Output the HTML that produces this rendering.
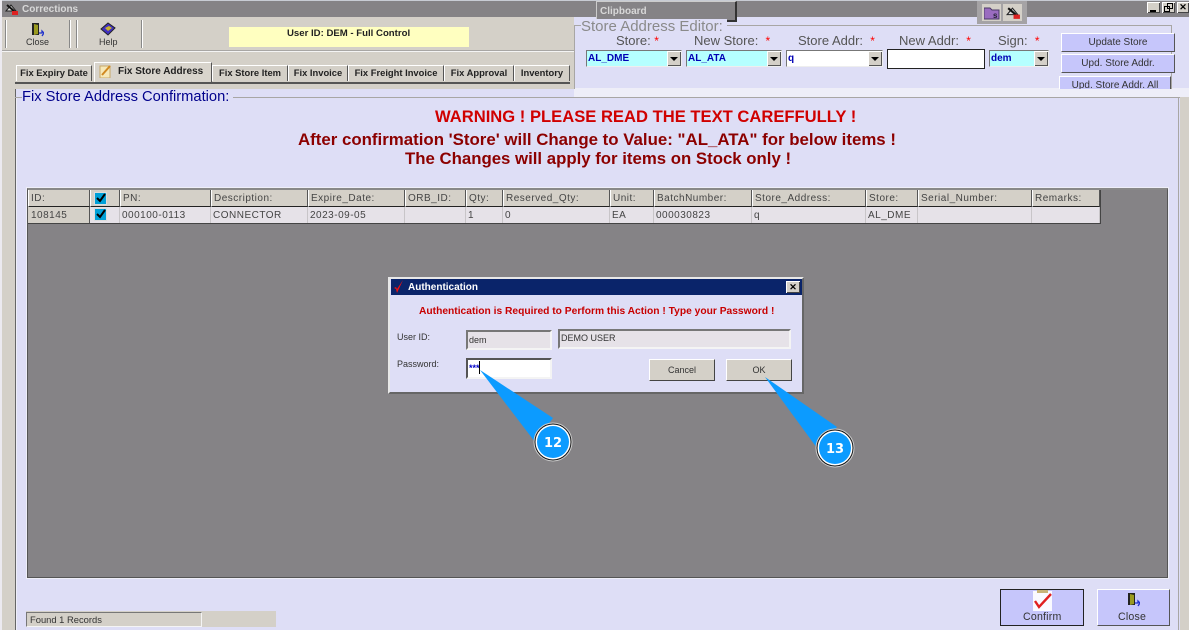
<!DOCTYPE html>
<html><head><meta charset="utf-8"><style>
html,body{margin:0;padding:0;width:1189px;height:630px;overflow:hidden;background:#d4d0c8}
body{position:relative;font-family:"Liberation Sans",sans-serif;color:#222}
.a,.t{position:absolute}
.t{white-space:nowrap;line-height:1}
.b{font-weight:bold}
.tab{position:absolute;top:65px;height:16px;box-sizing:border-box;background:#d4d0c8;border-top:1px solid #fff;border-left:1px solid #fff;border-right:1px solid #555;font:bold 9.4px/13px "Liberation Sans",sans-serif;color:#222;text-align:center;white-space:nowrap}
.lbl{position:absolute;top:34px;font-size:13px;line-height:14px;color:#555;white-space:nowrap}
.lbl i{color:#f00;font-style:normal;font-size:12px}
.cb{position:absolute;top:50px;height:15px;background:#b5ffff;border:1px solid;border-color:#777 #eee #eee #777;font:bold 10px/16px "Liberation Sans",sans-serif;color:#0000b4;padding-left:1px;box-sizing:content-box}
.ar{position:absolute;right:0;top:0;width:14px;height:15px;background:#d4d0c8;box-shadow:inset 1px 1px #fff,inset -1px -1px #555}
.ar:after{content:"";position:absolute;left:3px;top:6px;border:4px solid transparent;border-top:4px solid #000;border-bottom:0}
.btn{position:absolute;background:#c6c6fb;border:1px solid;border-color:#fff #555 #555 #fff;font-size:10px;color:#333;text-align:center;white-space:nowrap}
.h,.c{position:absolute;box-sizing:border-box;font-size:10px;white-space:nowrap;padding-left:2px;color:#444;letter-spacing:.5px}
.h{top:190px;height:17px;line-height:18px;background:#d4d0c8;border-right:1px solid #555;border-bottom:1px solid #222;border-left:1px solid #fff}
.c{top:207px;height:16px;line-height:17px;background:#e6e2e8;border-right:1px solid #c8c5c8}
.chk{position:absolute;left:94px;width:11px;height:11px;background:#00a0d8;border:1px solid #ddd}
.win{position:absolute;top:2px;width:13px;height:11px;background:#d4d0c8;box-shadow:inset 1px 1px #fff,inset -1px -1px #444;font:bold 9px/11px "Liberation Sans",sans-serif;text-align:center;color:#000}
.sunken{position:absolute;box-sizing:border-box;border:2px solid;border-color:#777 #f4f4f4 #f4f4f4 #777;font-size:9px;padding-left:1px;color:#333;white-space:nowrap}
.dbtn{position:absolute;top:359px;width:66px;height:22px;box-sizing:border-box;background:#d4d0c8;border:1px solid;border-color:#fff #444 #444 #fff;font-size:9px;line-height:20px;text-align:center;color:#333}
</style></head><body>

<!-- title bar -->
<div class="a" style="left:0;top:0;width:1189px;height:1px;background:#c8ccd4"></div>
<div class="a" style="left:2px;top:1px;width:1187px;height:16px;background:#858386"></div>
<div class="a" style="left:0;top:0;width:2px;height:630px;background:#eceaf0"></div>
<svg class="a" style="left:4px;top:3px" width="15" height="13" viewBox="0 0 15 13"><path d="M2 8L7 2l5 6z" fill="#ddd" stroke="#222"/><path d="M3 2l7 6" stroke="#111" stroke-width="2"/><rect x="8" y="8" width="6" height="4" fill="#d22"/></svg>
<div class="t b" style="left:22px;top:5px;font-size:10px;color:#d8d8d8">Corrections</div>

<!-- toolbar -->
<div class="a" style="left:2px;top:17px;width:572px;height:72px;background:#d4d0c8"></div>
<div class="a" style="left:2px;top:50px;width:572px;height:1px;background:#a8a6a4"></div>
<div class="a" style="left:2px;top:51px;width:572px;height:1px;background:#f4f4f4"></div>
<div class="a" style="left:5px;top:20px;width:1px;height:28px;background:#888;box-shadow:1px 0 #fff"></div>
<div class="a" style="left:69px;top:20px;width:1px;height:28px;background:#888;box-shadow:1px 0 #fff"></div>
<div class="a" style="left:76px;top:20px;width:1px;height:28px;background:#888;box-shadow:1px 0 #fff"></div>
<div class="a" style="left:141px;top:20px;width:1px;height:28px;background:#888;box-shadow:1px 0 #fff"></div>
<svg class="a" style="left:30px;top:22px" width="14" height="15"><path d="M2 1h7v12H2z" fill="#222"/><path d="M4 2l4 1v9l-4 1z" fill="#9a9a20"/><path d="M9 11h3v-2l2 2-2 3" fill="none" stroke="#2233cc" stroke-width="1.3"/></svg>
<div class="t" style="left:26px;top:38px;font-size:9px;color:#333">Close</div>
<svg class="a" style="left:100px;top:22px" width="16" height="14"><path d="M1 7L8 1l7 5-7 7z" fill="#4030c0" stroke="#222"/><path d="M5 6l4-2 3 2-4 3z" fill="#c8b030"/></svg>
<div class="t" style="left:99px;top:38px;font-size:9px;color:#333">Help</div>
<div class="a" style="left:229px;top:27px;width:240px;height:20px;background:#ffffc0"></div>
<div class="t b" style="left:287px;top:29px;font-size:9.6px;color:#222">User ID: DEM - Full Control</div>

<!-- tabs -->
<div class="tab" style="left:16px;width:76px">Fix Expiry Date</div>
<div class="tab" style="left:94px;top:62px;width:118px;height:20px;line-height:17px;text-align:left;text-indent:23px;font-size:10px;background:#d8d4cc">Fix Store Address</div>
<svg class="a" style="left:99px;top:64px" width="14" height="14"><rect x="1" y="2" width="10" height="12" fill="#f6e8b8" stroke="#c8a868"/><path d="M3 11L11 2" stroke="#d08820" stroke-width="2"/></svg>
<div class="tab" style="left:212px;width:76px">Fix Store Item</div>
<div class="tab" style="left:288px;width:60px">Fix Invoice</div>
<div class="tab" style="left:348px;width:96px">Fix Freight Invoice</div>
<div class="tab" style="left:444px;width:70px">Fix Approval</div>
<div class="tab" style="left:514px;width:56px">Inventory</div>
<div class="a" style="left:15px;top:82px;width:555px;height:2px;background:#555"></div>

<!-- main panel -->
<div class="a" style="left:15px;top:89px;width:1165px;height:541px;background:#dedef6;border-left:1px solid #666"></div>
<div class="a" style="left:574px;top:17px;width:615px;height:72px;background:#dedef6"></div>
<div class="a" style="left:1180px;top:89px;width:9px;height:541px;background:#d4d0c8"></div>
<div class="a" style="left:574px;top:88px;width:615px;height:9px;background:#eeeef8"></div>
<div class="a" style="left:15px;top:97px;width:1165px;height:1px;background:#a8a6a4"></div>
<div class="a" style="left:16px;top:98px;width:1px;height:532px;background:#eeeef8"></div>
<div class="a" style="left:1178px;top:97px;width:1px;height:533px;background:#a8a6a4"></div>
<div class="t" style="left:22px;top:90px;padding-right:4px;font-size:14.7px;background:#dedef6;color:#00008c">Fix Store Address Confirmation:</div>

<!-- clipboard -->
<div class="a" style="left:596px;top:1px;width:138px;height:18px;background:#858386;border:1px solid #ccc;border-right:2px solid #333;border-bottom:2px solid #333"></div>
<div class="t b" style="left:600px;top:7px;font-size:10px;color:#d8d8d8">Clipboard</div>

<!-- window buttons -->
<div class="a" style="left:977px;top:1px;width:50px;height:23px;background:#a5a3a5"></div>
<div class="a" style="left:982px;top:4px;width:19px;height:17px;background:#d4d0c8"></div>
<svg class="a" style="left:984px;top:6px" width="16" height="14"><path d="M0 2h6l2 2h7v9H0z" fill="#9a6cc0" stroke="#4a3a66"/><text x="9" y="12" font-size="8" font-weight="bold" fill="#223" font-family="Liberation Sans">s</text></svg>
<div class="a" style="left:1003px;top:4px;width:19px;height:17px;background:#d4d0c8"></div>
<svg class="a" style="left:1005px;top:6px" width="16" height="14" viewBox="0 0 15 13"><path d="M2 8L7 2l5 6z" fill="#ddd" stroke="#222"/><path d="M3 2l7 6" stroke="#111" stroke-width="2"/><rect x="8" y="8" width="6" height="4" fill="#d22"/></svg>
<div class="win" style="left:1147px"><span style="position:absolute;left:3px;top:8px;width:6px;height:2px;background:#000"></span></div>
<div class="win" style="left:1162px"><svg style="position:absolute;left:2px;top:1px" width="9" height="9"><path d="M3.5 .5h5v5h-5zM.5 3.5h5v5h-5z" fill="#d4d0c8" stroke="#000"/></svg></div>
<div class="win" style="left:1177px;width:12px">&#10005;</div>

<!-- store address editor -->
<div class="a" style="left:574px;top:25px;width:598px;height:64px;border:1px solid #a8a6a4;border-bottom:0;box-sizing:border-box"></div>
<div class="t" style="left:581px;top:19px;font-size:15px;padding-right:4px;background:#dedef6;color:#8a8a8a">Store Address Editor:</div>
<div class="lbl" style="left:616px">Store: <i>*</i></div>
<div class="lbl" style="left:694px">New Store: &nbsp;<i>*</i></div>
<div class="lbl" style="left:798px">Store Addr: &nbsp;<i>*</i></div>
<div class="lbl" style="left:899px">New Addr: &nbsp;<i>*</i></div>
<div class="lbl" style="left:998px">Sign: &nbsp;<i>*</i></div>
<div class="cb" style="left:586px;width:93px">AL_DME<span class="ar"></span></div>
<div class="cb" style="left:686px;width:93px">AL_ATA<span class="ar"></span></div>
<div class="cb" style="left:786px;width:94px;background:#fff">q<span class="ar"></span></div>
<div class="a" style="left:887px;top:49px;width:96px;height:18px;background:#fff;border:1px solid #222"></div>
<div class="cb" style="left:989px;width:57px">dem<span class="ar"></span></div>
<div class="btn" style="left:1061px;top:33px;width:112px;height:17px;line-height:18px">Update Store</div>
<div class="btn" style="left:1061px;top:54px;width:112px;height:17px;line-height:18px">Upd. Store Addr.</div>
<div class="a" style="left:1059px;top:76px;width:112px;height:13px;overflow:hidden"><div class="btn" style="left:0;top:0;width:110px;height:17px;line-height:18px">Upd. Store Addr. All</div></div>

<!-- warning -->
<div class="t b" style="left:435px;top:109px;font-size:16.6px;color:#d00000">WARNING ! PLEASE READ THE TEXT CAREFFULLY !</div>
<div class="t b" style="left:298px;top:132px;font-size:16.85px;color:#8c0000">After confirmation 'Store' will Change to Value: "AL_ATA" for below items !</div>
<div class="t b" style="left:405px;top:151px;font-size:16.8px;color:#8c0000">The Changes will apply for items on Stock only !</div>

<!-- grid -->
<div class="a" style="left:27px;top:188px;width:1141px;height:390px;box-sizing:border-box;background:#858386;border:1px solid #555;border-top:2px solid #888;outline:1px solid #eeeef8"></div>
<div class="h" style="left:28px;width:62px">ID:</div>
<div class="h" style="left:90px;width:30px"></div>
<div class="h" style="left:120px;width:91px">PN:</div>
<div class="h" style="left:211px;width:97px">Description:</div>
<div class="h" style="left:308px;width:97px">Expire_Date:</div>
<div class="h" style="left:405px;width:61px">ORB_ID:</div>
<div class="h" style="left:466px;width:37px">Qty:</div>
<div class="h" style="left:503px;width:107px">Reserved_Qty:</div>
<div class="h" style="left:610px;width:44px">Unit:</div>
<div class="h" style="left:654px;width:98px">BatchNumber:</div>
<div class="h" style="left:752px;width:114px">Store_Address:</div>
<div class="h" style="left:866px;width:52px">Store:</div>
<div class="h" style="left:918px;width:114px">Serial_Number:</div>
<div class="h" style="left:1032px;width:68px">Remarks:</div>
<div class="c" style="left:28px;width:62px;background:#d4d0c8;border-right:1px solid #555;padding-left:3px">108145</div>
<div class="c" style="left:90px;width:30px"></div>
<div class="c" style="left:120px;width:91px">000100-0113</div>
<div class="c" style="left:211px;width:97px">CONNECTOR</div>
<div class="c" style="left:308px;width:97px">2023-09-05</div>
<div class="c" style="left:405px;width:61px"></div>
<div class="c" style="left:466px;width:37px">1</div>
<div class="c" style="left:503px;width:107px">0</div>
<div class="c" style="left:610px;width:44px">EA</div>
<div class="c" style="left:654px;width:98px">000030823</div>
<div class="c" style="left:752px;width:114px">q</div>
<div class="c" style="left:866px;width:52px">AL_DME</div>
<div class="c" style="left:918px;width:114px"></div>
<div class="c" style="left:1032px;width:68px"></div>
<div class="a" style="left:1100px;top:190px;width:1px;height:34px;background:#444"></div>
<div class="a" style="left:28px;top:223px;width:1073px;height:1px;background:#444"></div>
<div class="chk" style="top:192px"></div>
<div class="chk" style="top:208px"></div>
<svg class="a" style="left:94px;top:192px" width="13" height="13"><path d="M3 6l3 3 5-7" fill="none" stroke="#000" stroke-width="2"/></svg>
<svg class="a" style="left:94px;top:208px" width="13" height="13"><path d="M3 6l3 3 5-7" fill="none" stroke="#000" stroke-width="2"/></svg>

<!-- dialog -->
<div class="a" style="left:388px;top:277px;width:416px;height:117px;box-sizing:border-box;background:#dedef6;border:2px solid;border-color:#e8e8e8 #666 #666 #e8e8e8"></div>
<div class="a" style="left:391px;top:279px;width:411px;height:16px;background:#0a246a"></div>
<svg class="a" style="left:392px;top:280px" width="14" height="14"><path d="M2 8l2 1 1 4 6-13-6 9-1-2z" fill="#f01010"/></svg>
<div class="t b" style="left:408px;top:283px;font-size:10px;color:#fff">Authentication</div>
<div class="win" style="left:786px;top:281px;width:14px;height:12px;line-height:12px">&#10005;</div>
<div class="t b" style="left:419px;top:307px;font-size:10.25px;color:#c80000">Authentication is Required to Perform this Action ! Type your Password !</div>
<div class="t" style="left:397px;top:333px;font-size:9px;color:#333">User ID:</div>
<div class="t" style="left:397px;top:360px;font-size:9px;color:#333">Password:</div>
<div class="sunken" style="left:466px;top:330px;width:86px;height:20px;background:#e6e2e8;line-height:16px">dem</div>
<div class="sunken" style="left:558px;top:329px;width:233px;height:20px;background:#e6e2e8;line-height:14px">DEMO USER</div>
<div class="sunken" style="left:466px;top:358px;width:86px;height:21px;background:#fff;line-height:16px;color:#0000c8;font-weight:bold;border-color:#555 #f4f4f4 #f4f4f4 #555">***<span style="position:absolute;left:11px;top:1px;width:1px;height:13px;background:#000"></span></div>
<div class="dbtn" style="left:649px">Cancel</div>
<div class="dbtn" style="left:726px">OK</div>

<!-- callouts -->
<svg class="a" style="left:470px;top:360px" width="400" height="120">
<path d="M10 10L65 82 83 58z" fill="#0c9bff"/>
<path d="M295 17L347 88 367 67z" fill="#0c9bff"/>
<circle cx="83" cy="82" r="19" fill="#fff" stroke="#ccc"/>
<circle cx="83" cy="82" r="18" fill="#fff" stroke="#111" stroke-width="1"/>
<circle cx="83" cy="82" r="16" fill="#0c9bff"/>
<circle cx="365" cy="88" r="19" fill="#fff" stroke="#ccc"/>
<circle cx="365" cy="88" r="18" fill="#fff" stroke="#111" stroke-width="1"/>
<circle cx="365" cy="88" r="16" fill="#0c9bff"/>
<text x="83" y="87" font-family="DejaVu Sans" font-size="13" font-weight="bold" fill="#fff" text-anchor="middle">12</text>
<text x="365" y="93" font-family="DejaVu Sans" font-size="13" font-weight="bold" fill="#fff" text-anchor="middle">13</text>
</svg>

<!-- status -->
<div class="a" style="left:26px;top:611px;width:250px;height:16px;background:#d4d0c8"></div>
<div class="sunken" style="left:26px;top:612px;width:176px;height:15px;border-width:1px;line-height:13px;padding-left:3px;font-size:9.4px">Found 1 Records</div>

<!-- bottom buttons -->
<div class="btn" style="left:1000px;top:589px;width:82px;height:35px;border-color:#222"></div>
<svg class="a" style="left:1031px;top:590px" width="24" height="22"><rect x="2" y="1" width="19" height="20" fill="#fafaff"/><rect x="6" y="0" width="11" height="3" fill="#c8b478"/><path d="M4 11l4 6L20 4" fill="none" stroke="#e02020" stroke-width="2.4"/></svg>
<div class="t" style="left:1023px;top:612px;font-size:10.6px;color:#333;letter-spacing:.2px">Confirm</div>
<div class="btn" style="left:1097px;top:589px;width:71px;height:35px"></div>
<svg class="a" style="left:1126px;top:592px" width="14" height="15"><path d="M2 1h7v12H2z" fill="#222"/><path d="M4 2l4 1v9l-4 1z" fill="#9a9a20"/><path d="M9 11h3v-2l2 2-2 3" fill="none" stroke="#2233cc" stroke-width="1.3"/></svg>
<div class="t" style="left:1118px;top:612px;font-size:10.6px;color:#333;letter-spacing:.2px">Close</div>
</body></html>
